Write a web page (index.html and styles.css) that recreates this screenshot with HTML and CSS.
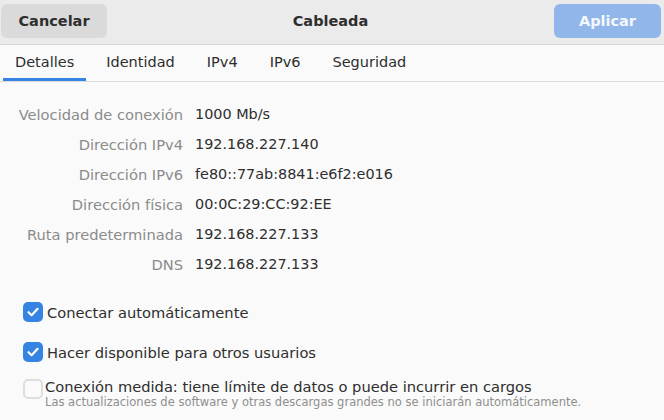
FILE: index.html
```html
<!DOCTYPE html>
<html lang="es">
<head>
<meta charset="utf-8">
<link rel="stylesheet" href="styles.css">
</head>
<body>
<div class="dialog">
  <header class="headerbar">
    <button class="btn btn-cancel">Cancelar</button>
    <div class="title">Cableada</div>
    <button class="btn btn-apply">Aplicar</button>
  </header>
  <nav class="tabs">
    <div class="tab active">Detalles</div>
    <div class="tab">Identidad</div>
    <div class="tab">IPv4</div>
    <div class="tab">IPv6</div>
    <div class="tab">Seguridad</div>
  </nav>
  <main class="content">
    <div class="info">
      <div class="label">Velocidad de conexión</div><div class="value">1000 Mb/s</div>
      <div class="label">Dirección IPv4</div><div class="value">192.168.227.140</div>
      <div class="label">Dirección IPv6</div><div class="value">fe80::77ab:8841:e6f2:e016</div>
      <div class="label">Dirección física</div><div class="value">00:0C:29:CC:92:EE</div>
      <div class="label">Ruta predeterminada</div><div class="value">192.168.227.133</div>
      <div class="label">DNS</div><div class="value">192.168.227.133</div>
    </div>
    <div class="checks">
      <div class="check-row">
        <span class="cb checked"><svg viewBox="0 0 20 20" width="20" height="20"><path d="M5.5 10.2 L8.6 13.2 L14.6 6.8" fill="none" stroke="#fff" stroke-width="2.2" stroke-linecap="round" stroke-linejoin="round"/></svg></span>
        <span class="check-text">Conectar automáticamente</span>
      </div>
      <div class="check-row">
        <span class="cb checked"><svg viewBox="0 0 20 20" width="20" height="20"><path d="M5.5 10.2 L8.6 13.2 L14.6 6.8" fill="none" stroke="#fff" stroke-width="2.2" stroke-linecap="round" stroke-linejoin="round"/></svg></span>
        <span class="check-text">Hacer disponible para otros usuarios</span>
      </div>
      <div class="check-row two-line">
        <span class="cb"></span>
        <div class="check-lines">
          <span class="check-text">Conexión medida: tiene límite de datos o puede incurrir en cargos</span>
          <span class="check-sub">Las actualizaciones de software y otras descargas grandes no se iniciarán automáticamente.</span>
        </div>
      </div>
    </div>
  </main>
</div>
</body>
</html>
```

FILE: styles.css
```css
* { box-sizing: border-box; }
html, body {
  margin: 0;
  padding: 0;
  background: #fafafa;
  font-family: "DejaVu Sans", sans-serif;
  font-size: 14.67px;
  color: #2e2e2e;
}
.dialog {
  width: 664px;
  height: 420px;
  overflow: hidden;
  background: #fafafa;
}
.headerbar {
  height: 45px;
  background: #ebebeb;
  border-bottom: 1px solid #d8d8d8;
  display: flex;
  align-items: flex-start;
  justify-content: space-between;
  padding: 4px 3px 0 1px;
}
.btn {
  font-family: "DejaVu Sans", sans-serif;
  font-size: 14.5px;
  font-weight: bold;
  height: 34px;
  border: none;
  border-radius: 6px;
  padding: 0;
}
.btn-cancel {
  width: 106px;
  background: #dadada;
  color: #2e2e2e;
}
.btn-apply {
  width: 107px;
  background: #91b7ea;
  color: #f4f8fd;
}
.title {
  font-weight: bold;
  font-size: 14.5px;
  line-height: 34px;
  color: #2e2e2e;
}
.tabs {
  height: 37px;
  display: flex;
  gap: 8px;
  padding-left: 3px;
  border-bottom: 1px solid #dcdcdc;
  background: #fafafa;
}
.tab {
  padding: 0 12px;
  line-height: 34px;
  font-size: 14.5px;
  border-bottom: 3px solid transparent;
  color: #2e2e2e;
}
.tab.active {
  border-bottom-color: #3584e4;
}
.content {
  padding-top: 17px;
}
.info {
  display: grid;
  grid-template-columns: 183px auto;
  column-gap: 12px;
  grid-auto-rows: 30px;
  align-items: center;
}
.label {
  text-align: right;
  color: #8b8b8b;
}
.value {
  color: #2e2e2e;
  font-size: 14.4px;
}
.checks {
  padding: 13px 0 0 23px;
  display: flex;
  flex-direction: column;
}
.check-row {
  display: flex;
  align-items: center;
  height: 40px;
  gap: 4px;
}
.cb {
  width: 20px;
  height: 20px;
  border-radius: 5px;
  flex: none;
  display: flex;
}
.cb.checked {
  background: #3584e4;
}
.check-row .cb:not(.checked) {
  border: 2px solid #dedede;
  background: #fafafa;
}
.two-line {
  height: 44px;
  align-items: flex-start;
  padding-top: 6px;
}
.two-line .cb {
  margin-top: 1px;
}
.check-lines {
  display: flex;
  flex-direction: column;
  margin-left: -2px;
}
.check-sub {
  font-size: 11.5px;
  color: #8e8e8e;
  line-height: 14px;
}
.check-lines .check-text {
  line-height: 17px;
}
```
